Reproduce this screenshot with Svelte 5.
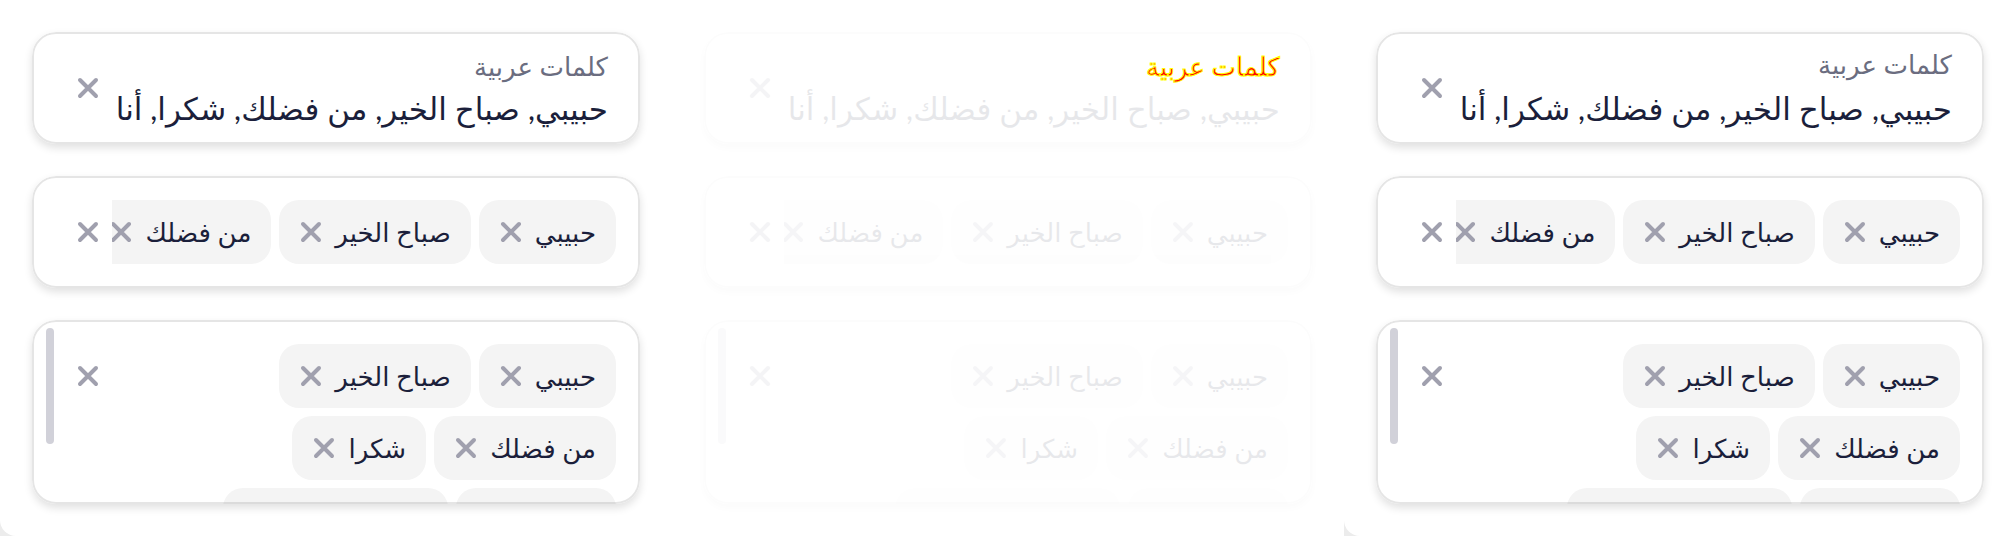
<script>
  const label = 'كلمات عربية';
  const words = ['حبيبي', 'صباح الخير', 'من فضلك', 'شكرا'];
  const panes = ['before', 'diff', 'after'];
</script>

{#snippet cross()}
  <svg viewBox="0 0 24 24" width="24" height="24" aria-hidden="true">
    <path d="M4 4 20 20M20 4 4 20" />
  </svg>
{/snippet}

{#snippet chip(word)}
  <span class="chip">
    <span>{word}</span>
    <button type="button" aria-label={word}>{@render cross()}</button>
  </span>
{/snippet}

<main>
  {#each panes as pane}
    <section class={pane} dir="rtl" lang="ar">
      <div class="field text">
        <div class="stack">
          <label for="{pane}-words">{label}</label>
          <input id="{pane}-words" type="text" readonly value={words.join(', ') + ', أنا'} />
        </div>
        <button class="clear" type="button" aria-label={label}>{@render cross()}</button>
      </div>

      <div class="field">
        <div class="row">
          {#each words.slice(0, 3) as word}
            {@render chip(word)}
          {/each}
        </div>
        <button class="clear" type="button" aria-label={label}>{@render cross()}</button>
      </div>

      <div class="field tall">
        <div class="row wrap">
          {#each words as word}
            {@render chip(word)}
          {/each}
          <span class="chip short"></span>
          <span class="chip long"></span>
        </div>
        <button class="clear" type="button" aria-label={label}>{@render cross()}</button>
        <span class="thumb"></span>
      </div>
    </section>
  {/each}
</main>

<style>
  :global(body) {
    margin: 0;
    background: #ececec;
  }
  main {
    display: grid;
    grid-template-columns: repeat(3, minmax(0, 1fr));
    font-family: Lato, "DejaVu Sans", sans-serif;
    color: #1b1f3b;
  }
  section {
    display: flex;
    flex-direction: column;
    gap: 32px;
    padding: 32px;
    background: #fff;
    border-radius: 0 0 0 16px;
  }
  .field {
    position: relative;
    box-sizing: border-box;
    display: flex;
    align-items: flex-start;
    height: 112px;
    padding: 24px 24px 24px 44px;
    border-radius: 24px;
    box-shadow: 0 4px 8px rgba(0, 0, 0, 0.12);
    overflow: hidden;
  }
  .field::after {
    content: "";
    position: absolute;
    inset: 0;
    border: 2px solid rgba(0, 0, 0, 0.1);
    border-radius: inherit;
    pointer-events: none;
  }
  .tall {
    height: 184px;
  }
  .text {
    padding: 0 32px 0 44px;
    align-items: center;
  }
  .stack {
    flex: 1;
    min-width: 0;
    display: flex;
    flex-direction: column;
    padding-top: 4px;
  }
  label {
    height: 36px;
    font-size: 26px;
    line-height: 36px;
    color: #6b6d80;
  }
  input {
    box-sizing: border-box;
    width: 100%;
    height: 48px;
    padding: 0;
    border: 0;
    outline: 0;
    background: none;
    color: inherit;
    font-family: inherit;
    font-size: 31px;
    line-height: 48px;
  }
  .row {
    flex: 1;
    min-width: 0;
    display: flex;
    gap: 8px;
    overflow: hidden;
  }
  .wrap {
    flex-wrap: wrap;
    padding-left: 24px;
    overflow: visible;
  }
  .chip {
    flex: none;
    display: flex;
    align-items: center;
    gap: 12px;
    height: 64px;
    padding: 0 20px;
    border-radius: 20px;
    background: #f4f4f4;
    font-size: 26px;
    white-space: nowrap;
    box-sizing: border-box;
  }
  .short {
    width: 160px;
  }
  .long {
    width: 225px;
  }
  button {
    flex: none;
    display: block;
    padding: 0;
    border: 0;
    background: none;
  }
  svg {
    display: block;
    fill: none;
    stroke: #a0a0ae;
    stroke-width: 4;
    stroke-linecap: round;
  }
  .clear {
    display: flex;
    align-items: center;
    height: 64px;
    margin-right: 12px;
  }
  .thumb {
    position: absolute;
    left: 14px;
    top: 8px;
    width: 8px;
    height: 116px;
    border-radius: 4px;
    background: #d1d1d9;
  }
  .after label {
    line-height: 32px;
  }
  .diff {
    border-radius: 0;
  }
  .diff .field {
    box-shadow: 0 4px 8px rgba(0, 0, 0, 0.02);
  }
  .diff .field::after,
  .diff .row,
  .diff .clear,
  .diff input,
  .diff .thumb {
    opacity: 0.1;
  }
  .diff label {
    color: #f00;
    -webkit-text-stroke: 1px #ff0;
  }
</style>
